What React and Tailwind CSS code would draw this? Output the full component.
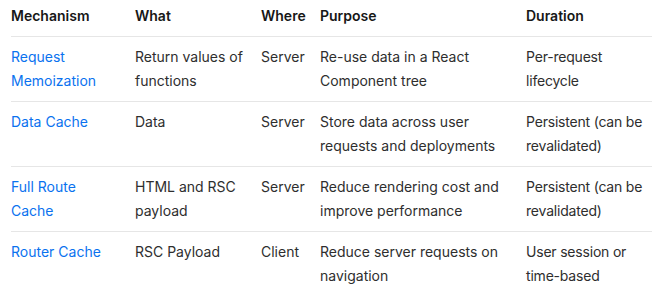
const rows = [
  ["Request Memoization", "Return values of functions", "Server", "Re-use data in a React Component tree", "Per-request lifecycle"],
  ["Data Cache", "Data", "Server", "Store data across user requests and deployments", "Persistent (can be revalidated)"],
  ["Full Route Cache", "HTML and RSC payload", "Server", "Reduce rendering cost and improve performance", "Persistent (can be revalidated)"],
  ["Router Cache", "RSC Payload", "Client", "Reduce server requests on navigation", "User session or time-based"],
];

const cols = "grid grid-cols-[124px_126px_59px_206px_1fr]";

export default function App() {
  return (
    <div className="w-[652px] h-[298px] bg-white pl-[11px] font-['Inter',sans-serif] text-[14px] leading-6 overflow-hidden">
      <div className={`${cols} border-b border-[#e6e6e6] pt-1 pb-2 font-semibold text-[#171717]`}>
        <div>Mechanism</div>
        <div>What</div>
        <div>Where</div>
        <div>Purpose</div>
        <div>Duration</div>
      </div>
      {rows.map((r, i) => (
        <div
          key={i}
          className={`${cols} py-2 text-[#2e2e2e] ${i < rows.length - 1 ? "border-b border-[#e6e6e6]" : ""}`}
        >
          <div className="pr-4 text-[#0a72ef]">{r[0]}</div>
          <div className="pr-3">{r[1]}</div>
          <div className="pr-2">{r[2]}</div>
          <div className="pr-3">{r[3]}</div>
          <div className="pr-1 tracking-[-0.2px]">{r[4]}</div>
        </div>
      ))}
    </div>
  );
}
